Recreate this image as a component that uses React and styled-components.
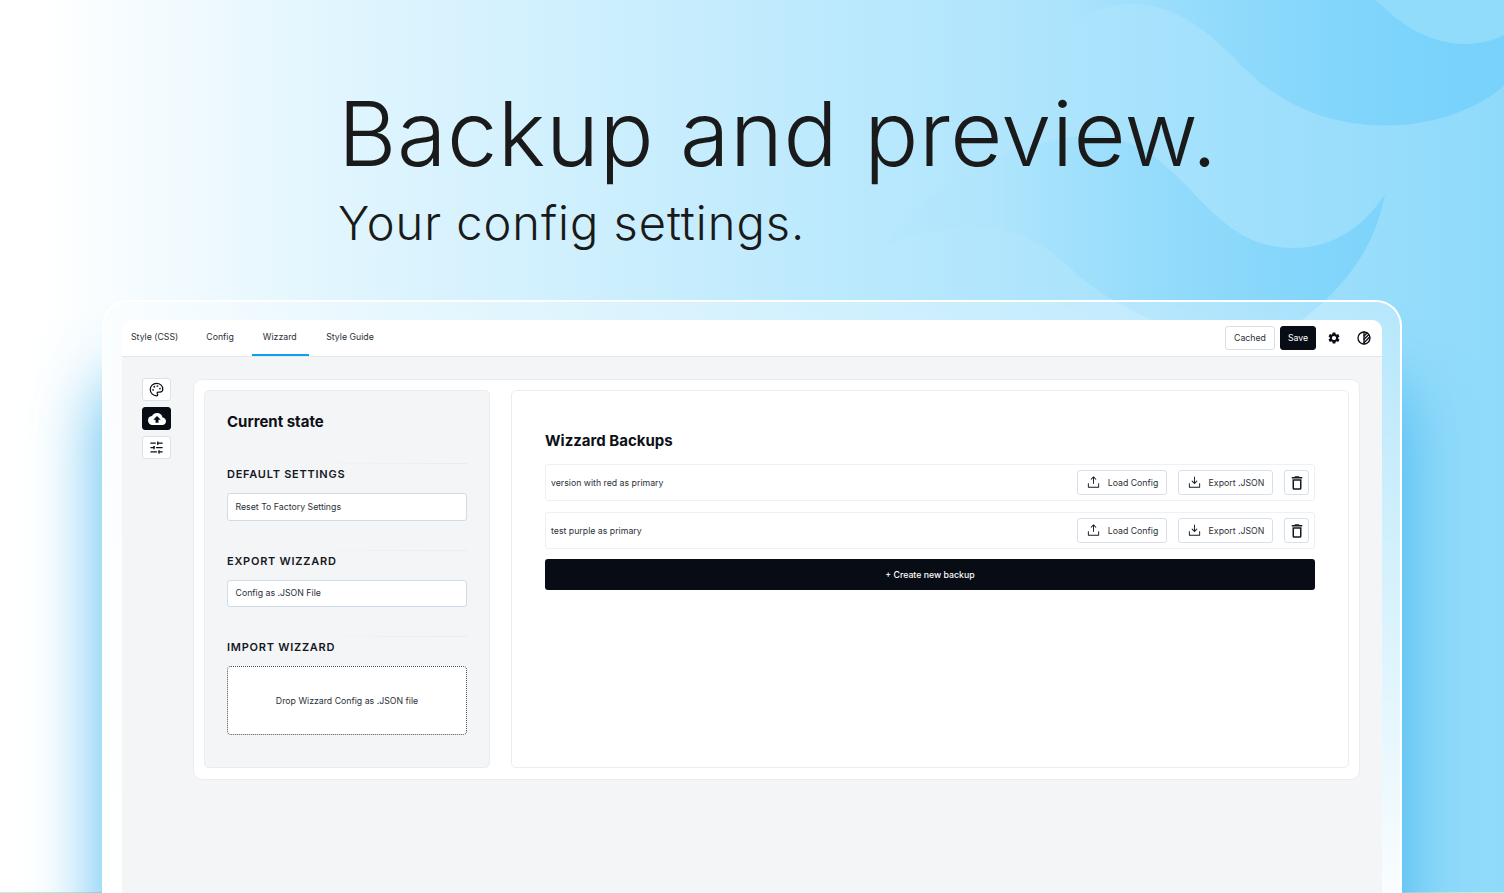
import React from 'react';
import styled, { createGlobalStyle } from 'styled-components';
import { SlidersHorizontal, Palette } from 'lucide-react';
import { MdCloudUpload, MdSettings, MdDeleteOutline } from 'react-icons/md';
import { PiUploadSimple, PiDownloadSimple } from 'react-icons/pi';
import { TbCircleHalf2 } from 'react-icons/tb';

const GlobalStyle = createGlobalStyle`
  * { box-sizing: border-box; }
  html, body { margin: 0; padding: 0; }
  body { font-family: Inter, "Liberation Sans", sans-serif; color: #14181f; }
`;

const Waves = () => (
  <WaveArt viewBox="0 0 1504 893" aria-hidden="true">
    <defs>
      <linearGradient id="waveTop" gradientUnits="userSpaceOnUse" x1="1060" y1="0" x2="1470" y2="0">
        <stop offset="0" stopColor="#78d2fb" stopOpacity="0" />
        <stop offset="1" stopColor="#78d2fb" />
      </linearGradient>
      <linearGradient id="waveLow" gradientUnits="userSpaceOnUse" x1="1000" y1="0" x2="1370" y2="0">
        <stop offset="0" stopColor="#7fd4fb" stopOpacity="0.04" />
        <stop offset="1" stopColor="#7fd4fb" />
      </linearGradient>
    </defs>
    <path fill="url(#waveTop)" d="M1050 60C1060 30 1090 5 1130 4C1200 5 1230 62 1270 90C1320 125 1370 127 1400 125C1450 122 1490 100 1504 85L1504 0L1050 0Z" />
    <path fill="#91dbfb" d="M1376 0C1400 25 1430 44 1465 44C1480 44 1495 40 1504 35L1504 0Z" />
    <path fill="url(#waveLow)" d="M885 245C930 175 1060 120 1120 140C1190 160 1210 248 1293 248C1335 248 1365 225 1385 194C1375 250 1340 300 1265 345C1200 345 1130 317 1080 277C1040 240 1000 205 885 245Z" />
  </WaveArt>
);

const tabs = [
  { label: 'Style (CSS)' },
  { label: 'Config' },
  { label: 'Wizzard', active: true },
  { label: 'Style Guide' },
];

const backups = ['version with red as primary', 'test purple as primary'];

const App = () => (
  <Page>
    <GlobalStyle />
    <Waves />
    <Hero>
      <Headline>Backup and preview.</Headline>
      <Subline>Your config settings.</Subline>
    </Hero>
    <Frame>
      <Window>
        <TabBar>
          <TabList>
            {tabs.map((tab) => (
              <Tab key={tab.label} $active={tab.active}>{tab.label}</Tab>
            ))}
          </TabList>
          <BarActions>
            <BarButton $width={50}>Cached</BarButton>
            <BarButton $width={36} $dark>Save</BarButton>
            <BarIcon $first><MdSettings size={14} /></BarIcon>
            <BarIcon><TbCircleHalf2 size={16} /></BarIcon>
          </BarActions>
        </TabBar>
        <Workspace>
          <SideRail>
            <RailButton><Palette size={15} strokeWidth={2} /></RailButton>
            <RailButton $active><MdCloudUpload size={18} /></RailButton>
            <RailButton><SlidersHorizontal size={15} strokeWidth={2} /></RailButton>
          </SideRail>
          <MainCard>
            <StatePanel>
              <PanelTitle>Current state</PanelTitle>
              <Section $first>
                <SectionTitle>DEFAULT SETTINGS</SectionTitle>
                <FieldButton>Reset To Factory Settings</FieldButton>
              </Section>
              <Section>
                <SectionTitle>EXPORT WIZZARD</SectionTitle>
                <FieldButton>Config as .JSON File</FieldButton>
              </Section>
              <Section>
                <SectionTitle>IMPORT WIZZARD</SectionTitle>
                <DropZone>Drop Wizzard Config as .JSON file</DropZone>
              </Section>
            </StatePanel>
            <BackupPanel>
              <BackupTitle>Wizzard Backups</BackupTitle>
              <BackupList>
                {backups.map((name) => (
                  <BackupRow key={name}>
                    <BackupName>{name}</BackupName>
                    <RowActions>
                      <RowButton $width={90}><PiUploadSimple size={15} />Load Config</RowButton>
                      <RowButton $width={95}><PiDownloadSimple size={15} />Export .JSON</RowButton>
                      <RowButton $width={25}><MdDeleteOutline size={18} /></RowButton>
                    </RowActions>
                  </BackupRow>
                ))}
                <CreateButton>+ Create new backup</CreateButton>
              </BackupList>
            </BackupPanel>
          </MainCard>
        </Workspace>
      </Window>
    </Frame>
  </Page>
);

const Page = styled.div`
  position: relative;
  width: 1504px;
  height: 893px;
  overflow: hidden;
  background:
    linear-gradient(#b4f5d4, #b4f5d4) bottom / 100% 1px no-repeat,
    linear-gradient(90deg, #ffffff 2.5%, #e0f5fe 23%, #bbe9fd 56%, #8fdafb 100%);
`;

const WaveArt = styled.svg`
  position: absolute;
  inset: 0;
  width: 1504px;
  height: 893px;
`;

const Hero = styled.header`
  position: relative;
  height: 300px;
  padding: 82px 0 0 338px;
  color: #1a1a1a;
`;

const Headline = styled.h1`
  margin: 0 0 9px;
  font-size: 90px;
  line-height: 104px;
  font-weight: 350;
  letter-spacing: 0.55px;
`;

const Subline = styled.p`
  margin: 0;
  font-size: 47px;
  line-height: 56px;
  font-weight: 350;
  letter-spacing: 0.97px;
`;

const Frame = styled.section`
  position: relative;
  width: 1300px;
  height: 620px;
  margin-left: 102px;
  padding: 18px;
  border: 2px solid #ffffff;
  border-bottom: 0;
  border-radius: 26px 26px 0 0;
  background: linear-gradient(180deg, rgba(255, 255, 255, 0.3) 0%, rgba(255, 255, 255, 0.95) 96%);
  box-shadow: 0 85px 70px rgba(40, 170, 235, 0.8);
`;

const Window = styled.div`
  height: 100%;
  border-radius: 10px 10px 0 0;
  background: #f4f5f7;
  overflow: hidden;
`;

const TabBar = styled.nav`
  display: flex;
  justify-content: space-between;
  height: 37px;
  padding-right: 9px;
  background: #ffffff;
  border-bottom: 1px solid #e3e8ef;
`;

const TabList = styled.div`
  display: flex;
  gap: 6px;
`;

const Tab = styled.div`
  display: flex;
  align-items: center;
  height: 36px;
  padding: 0 ${(p) => (p.$active ? '12.5px' : '12px')} 1px 11px;
  font-size: 8.75px;
  color: #2b3038;
  border-bottom: 2px solid ${(p) => (p.$active ? '#0ea0ee' : 'transparent')};
  &:first-child { padding: 0 11px 1px 9px; }
`;

const BarActions = styled.div`
  display: flex;
  align-items: center;
  gap: 5px;
  padding-bottom: 1px;
`;

const BarButton = styled.div`
  display: flex;
  align-items: center;
  justify-content: center;
  width: ${(p) => p.$width}px;
  height: 24px;
  font-size: 8.75px;
  border-radius: 3px;
  color: ${(p) => (p.$dark ? '#ffffff' : '#2b3038')};
  background: ${(p) => (p.$dark ? '#080c14' : '#ffffff')};
  border: 1px solid ${(p) => (p.$dark ? '#080c14' : '#d6dfea')};
`;

const BarIcon = styled.div`
  display: flex;
  align-items: center;
  justify-content: center;
  width: 18px;
  height: 18px;
  margin-left: ${(p) => (p.$first ? '4px' : '7px')};
  color: #0b0f16;
`;

const Workspace = styled.div`
  display: flex;
  align-items: flex-start;
  padding: 22px 22px 0 20px;
`;

const SideRail = styled.aside`
  display: flex;
  flex-direction: column;
  gap: 6px;
  width: 29px;
  margin: -1px 22px 0 0;
`;

const RailButton = styled.div`
  display: flex;
  align-items: center;
  justify-content: center;
  width: 29px;
  height: 23px;
  border-radius: 3px;
  color: ${(p) => (p.$active ? '#ffffff' : '#0b0f16')};
  background: ${(p) => (p.$active ? '#080c14' : '#ffffff')};
  border: 1px solid ${(p) => (p.$active ? '#080c14' : '#d9e2ec')};
`;

const MainCard = styled.main`
  display: flex;
  gap: 21px;
  flex: 1;
  height: 401px;
  padding: 10px 10px 11px;
  border: 1px solid #e9edf2;
  border-radius: 9px;
  background: #ffffff;
`;

const StatePanel = styled.div`
  width: 286px;
  padding: 22px;
  border: 1px solid #e9edf2;
  border-radius: 5px;
  background: #f4f5f7;
`;

const PanelTitle = styled.h2`
  margin: 0;
  font-size: 15px;
  line-height: 18px;
  font-weight: 700;
  color: #0d1117;
`;

const Section = styled.div`
  margin-top: ${(p) => (p.$first ? '32px' : '29px')};
  padding-top: 4px;
  background: linear-gradient(90deg, rgba(228, 232, 238, 0) 30%, #e8ebf0) top / 100% 1px no-repeat;
`;

const SectionTitle = styled.h3`
  margin: 0 0 11px;
  font-size: 11px;
  line-height: 15px;
  font-weight: 600;
  letter-spacing: 0.75px;
  color: #14181f;
`;

const FieldButton = styled.div`
  display: flex;
  align-items: center;
  height: 27.5px;
  padding: 0 7.5px;
  font-size: 8.75px;
  color: #2b3038;
  background: #ffffff;
  border: 1px solid #cfdbe9;
  border-radius: 3px;
`;

const DropZone = styled.div`
  display: flex;
  align-items: center;
  justify-content: center;
  height: 69px;
  font-size: 8.75px;
  color: #2b3038;
  background: #ffffff;
  border: 1px dotted #4b4f57;
  border-radius: 4px;
`;

const BackupPanel = styled.div`
  flex: 1;
  padding: 41px 33px 0;
  border: 1px solid #e9edf2;
  border-radius: 5px;
  background: #ffffff;
`;

const BackupTitle = styled.h2`
  margin: 0 0 14px;
  font-size: 15px;
  line-height: 18px;
  font-weight: 700;
  color: #0d1117;
`;

const BackupList = styled.div`
  display: flex;
  flex-direction: column;
  gap: 11px;
`;

const BackupRow = styled.div`
  display: flex;
  align-items: center;
  justify-content: space-between;
  height: 37px;
  padding: 0 5px;
  border: 1px solid #edf1f6;
  border-radius: 3px;
`;

const BackupName = styled.span`
  font-size: 8.75px;
  color: #2b3038;
`;

const RowActions = styled.div`
  display: flex;
  gap: 11px;
`;

const RowButton = styled.div`
  display: flex;
  align-items: center;
  justify-content: center;
  gap: 7px;
  width: ${(p) => p.$width}px;
  height: 25px;
  font-size: 8.75px;
  color: #2b3038;
  background: #ffffff;
  border: 1px solid #d6dfea;
  border-radius: 3px;
  svg { color: #14181f; }
`;

const CreateButton = styled.div`
  display: flex;
  align-items: center;
  justify-content: center;
  height: 31px;
  margin-top: -1px;
  font-size: 8.75px;
  font-weight: 500;
  color: #ffffff;
  background: #080c14;
  border-radius: 3px;
`;

export default App;
